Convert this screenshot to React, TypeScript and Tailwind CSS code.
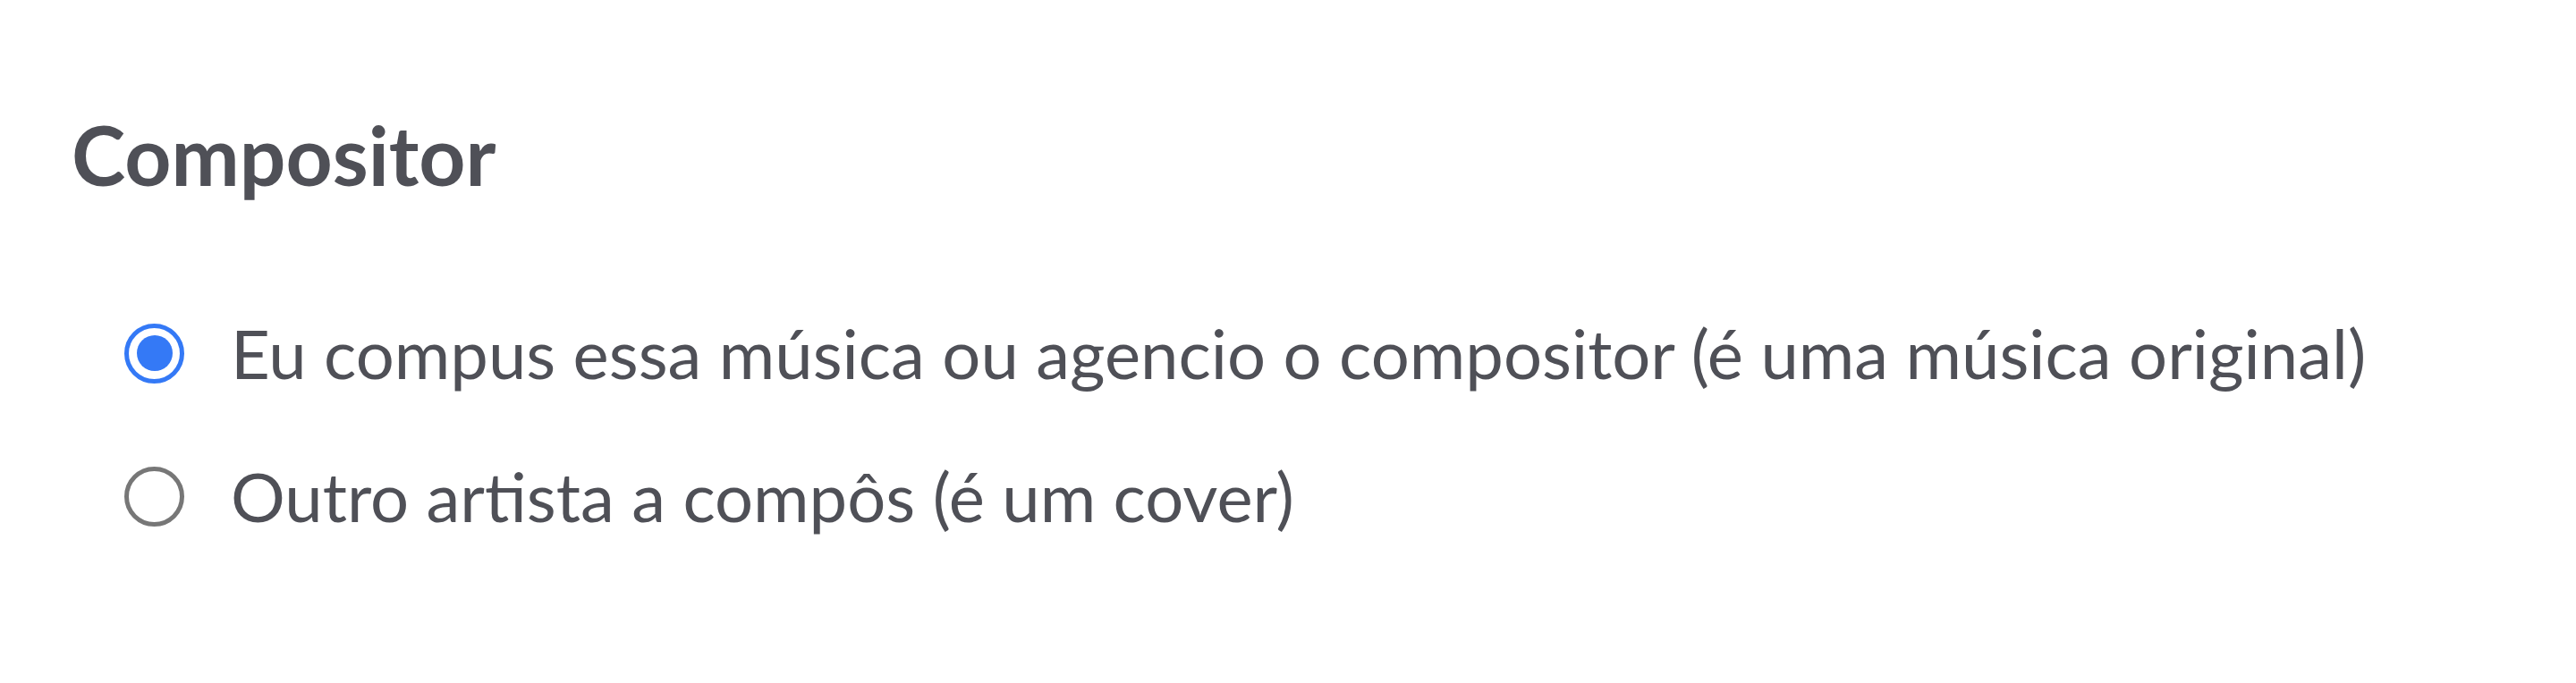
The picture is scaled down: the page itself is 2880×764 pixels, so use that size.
import React, { useState } from 'react';

const options = [
    { id: 'original', label: 'Eu compus essa música ou agencio o compositor (é uma música original)' },
    { id: 'cover', label: 'Outro artista a compôs (é um cover)' },
];

const Radio: React.FC<{ checked: boolean }> = ({ checked }) => (
    <span
        className={
            checked
                ? 'flex h-[67px] w-[67px] shrink-0 items-center justify-center rounded-full border-[5px] border-[#3479f6]'
                : 'flex h-[67px] w-[67px] shrink-0 items-center justify-center rounded-full border-[5px] border-[#777777]'
        }
    >
        {checked && <span className="h-[40px] w-[40px] rounded-full bg-[#3479f6]" />}
    </span>
);

const App: React.FC = () => {
    const [value, setValue] = useState('original');

    return (
        <div className="min-h-[764px] bg-white pl-[80px] pt-[118px] font-['Lato',sans-serif] text-[#4f5057]">
            <h2 className="text-[91px] font-bold leading-[110px]">Compositor</h2>
            <div className="mt-[128px] flex flex-col gap-[82px] pl-[59px]">
                {options.map((opt) => (
                    <label
                        key={opt.id}
                        onClick={() => setValue(opt.id)}
                        className="flex cursor-pointer items-center gap-[52px] text-[76px] leading-[78px]"
                    >
                        <Radio checked={value === opt.id} />
                        <span>{opt.label}</span>
                    </label>
                ))}
            </div>
        </div>
    );
};

export default App;
